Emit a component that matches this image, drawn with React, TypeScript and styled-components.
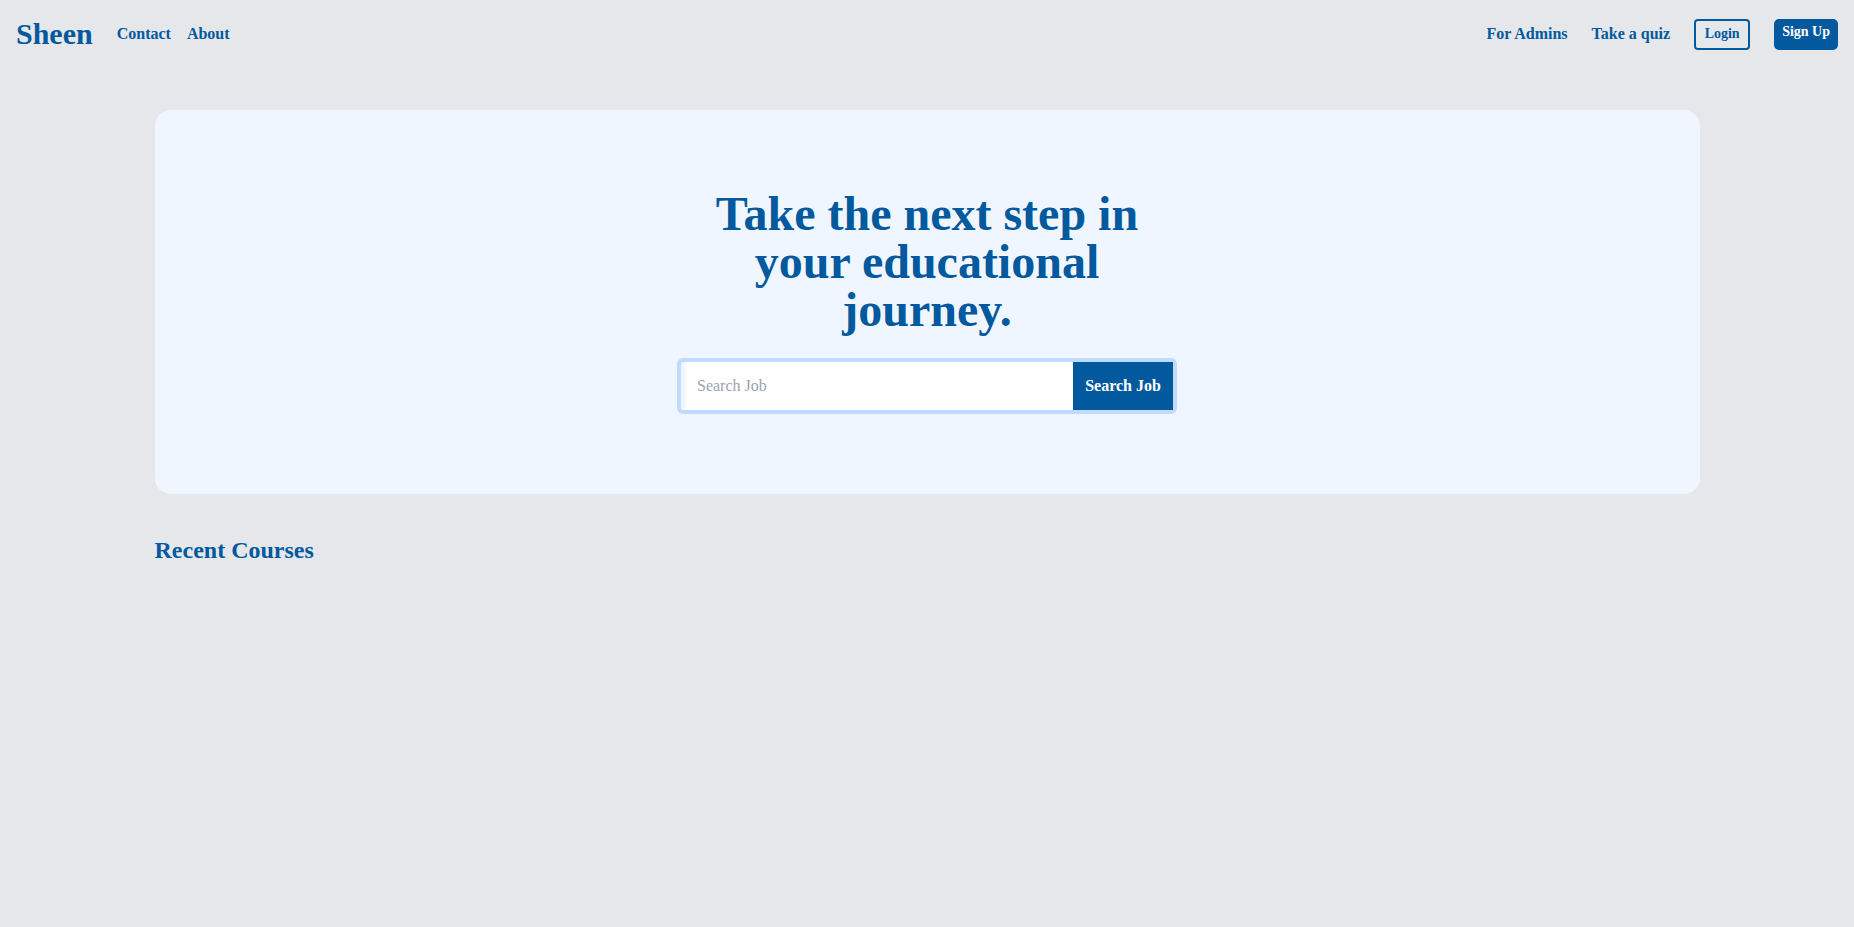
import styled, { createGlobalStyle } from 'styled-components';

const primary = '#02599d';

const GlobalStyle = createGlobalStyle`
  html, body {
    margin: 0;
    padding: 0;
    background: #e5e7eb;
    font-family: "Liberation Serif", "Times New Roman", serif;
  }
  #root {
    min-height: 100vh;
  }
  * {
    box-sizing: border-box;
  }
`;

const Header = styled.header`
  display: flex;
  align-items: center;
  justify-content: space-between;
  padding: 16px;
  height: 68px;
`;

const Left = styled.div`
  display: flex;
  align-items: center;
`;

const Logo = styled.a`
  font-size: 30px;
  line-height: 36px;
  font-weight: 700;
  color: ${primary};
  text-decoration: none;
  margin-right: 24px;
`;

const Links = styled.nav<{ $gap: number }>`
  display: flex;
  align-items: center;
  gap: ${(p) => p.$gap}px;
`;

const NavLink = styled.a`
  font-size: 16px;
  line-height: 24px;
  font-weight: 700;
  color: ${primary};
  text-decoration: none;
`;

const Button = styled.button<{ $filled?: boolean }>`
  font-family: inherit;
  font-size: 14px;
  line-height: 20px;
  font-weight: 700;
  cursor: pointer;
  border: 2px solid ${primary};
  border-radius: ${(p) => (p.$filled ? '5px' : '4px')};
  background: ${(p) => (p.$filled ? primary : 'transparent')};
  color: ${(p) => (p.$filled ? '#fff' : primary)};
  padding: ${(p) => (p.$filled ? '1px 6px 8px' : '3px 8.5px 4px')};
  height: 31px;
`;

const Main = styled.main`
  max-width: 1545px;
  margin: 0 auto;
  padding-top: 42px;
`;

const Hero = styled.section`
  background: #eff6ff;
  border-radius: 16px;
  padding: 80px 0;
  display: flex;
  flex-direction: column;
  align-items: center;
`;

const Title = styled.h1`
  margin: 0;
  max-width: 448px;
  font-size: 48px;
  line-height: 48px;
  font-weight: 700;
  text-align: center;
  color: ${primary};
`;

const SearchForm = styled.form`
  margin-top: 24px;
  width: 500px;
  display: flex;
  border: 4px solid #bfdbfe;
  border-radius: 6px;
  background: #eff6ff;
  padding-left: 4px;
`;

const SearchInput = styled.input`
  flex: 1;
  height: 48px;
  border: none;
  outline: none;
  background: #fff;
  padding: 0 12px;
  font-family: inherit;
  font-size: 16px;
  color: #111;
  &::placeholder {
    color: #9ca3af;
  }
`;

const SearchButton = styled.button`
  width: 100px;
  border: none;
  background: ${primary};
  color: #fff;
  font-family: inherit;
  font-size: 16px;
  font-weight: 700;
  cursor: pointer;
`;

const SectionTitle = styled.h2`
  margin: 40px 0 0;
  font-size: 24px;
  line-height: 32px;
  font-weight: 700;
  color: ${primary};
`;

function App() {
  return (
    <>
      <GlobalStyle />
      <Header>
        <Left>
          <Logo href="#">Sheen</Logo>
          <Links $gap={16}>
            <NavLink href="#">Contact</NavLink>
            <NavLink href="#">About</NavLink>
          </Links>
        </Left>
        <Links $gap={24}>
          <NavLink href="#">For Admins</NavLink>
          <NavLink href="#">Take a quiz</NavLink>
          <Button>Login</Button>
          <Button $filled>Sign Up</Button>
        </Links>
      </Header>
      <Main>
        <Hero>
          <Title>Take the next step in your educational journey.</Title>
          <SearchForm onSubmit={(e) => e.preventDefault()}>
            <SearchInput placeholder="Search Job" />
            <SearchButton type="submit">Search Job</SearchButton>
          </SearchForm>
        </Hero>
        <SectionTitle>Recent Courses</SectionTitle>
      </Main>
    </>
  );
}

export default App;
